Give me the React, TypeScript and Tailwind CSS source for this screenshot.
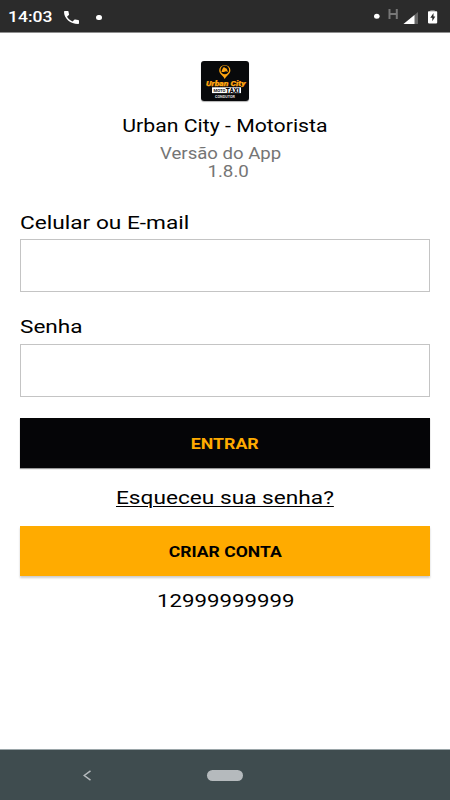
import { useState } from "react";

function StatusBar() {
  return (
    <div className="h-[33px] shrink-0 bg-[#2b2b2b] border-b border-[#8f8f8f] flex items-center justify-between text-white">
      <div className="flex items-center pl-2 pt-0.5">
        <span className="w-[56px] text-[15px] leading-none font-medium">
          <span className="inline-block origin-left scale-x-[1.17]">14:03</span>
        </span>
        <svg viewBox="3 3 18 18" preserveAspectRatio="none" className="w-[15px] h-[13px]" fill="currentColor">
          <path d="M6.62 10.79c1.44 2.83 3.76 5.14 6.59 6.59l2.2-2.2c.27-.27.67-.36 1.02-.24 1.12.37 2.33.57 3.57.57.55 0 1 .45 1 1V20c0 .55-.45 1-1 1-9.39 0-17-7.61-17-17 0-.55.45-1 1-1h3.5c.55 0 1 .45 1 1 0 1.25.2 2.45.57 3.57.11.35.03.74-.25 1.02l-2.2 2.2z" />
        </svg>
        <span className="ml-[17px] w-[6px] h-[5px] rounded-full bg-white" />
      </div>
      <svg viewBox="0 0 80 32" className="w-20 h-8">
        <ellipse cx="6.8" cy="16.2" rx="2.8" ry="2.5" fill="#fff" />
        <path d="M19.5 9v10M26.8 9v10M19.5 14h7.3" stroke="#777" strokeWidth="2" fill="none" />
        <path d="M33.5 24L48 12v12z" fill="#666" />
        <path d="M33.5 24L44.5 14.9V24z" fill="#fff" />
        <path d="M60.3 10h4.4v1.4h-4.4z" fill="#777" />
        <rect x="58" y="11.2" width="9.2" height="12.2" rx="0.8" fill="#fff" />
        <path d="M63.5 13l-3.2 4.7h2v3.6l3-4.8h-1.8z" fill="#2b2b2b" />
      </svg>
    </div>
  );
}

function Logo() {
  return (
    <svg viewBox="0 0 48 40" className="w-12 h-10 rounded-[3px] shadow-[0_1px_1px_rgba(0,0,0,0.3)]">
      <rect width="48" height="40" fill="#08090b" />
      <path d="M23.800 18.300c-1-3.300-5.600-5-5.600-9a5.600 5.400 0 0 1 11.200 0c0 4-4.600 5.700-5.600 9z" fill="#ffa510" />
      <circle cx="23.800" cy="8.900" r="4.300" fill="#08090b" />
      <path d="M20.400 11l1-3 1.400-2 1.600 1 1.400.7 1.200 3.300-2-.8-2.300.8z" fill="#ffa510" />
      <text x="5" y="24.500" textLength="39.500" lengthAdjust="spacingAndGlyphs" fill="#ffa510" stroke="#ffa510" strokeWidth="0.25" fontFamily="Roboto, sans-serif" fontSize="7.800" fontWeight="900" fontStyle="italic">Urban City</text>
      <rect x="11" y="26.300" width="29" height="5.800" fill="#fff" />
      <text x="12.500" y="31" textLength="12" lengthAdjust="spacingAndGlyphs" fill="#111" fontFamily="Roboto, sans-serif" fontSize="4.200" fontWeight="700">MOTO</text>
      <text x="24.800" y="31.500" textLength="14" lengthAdjust="spacingAndGlyphs" fill="#08090b" fontFamily="Roboto, sans-serif" fontSize="6.400" fontWeight="900">TÁXI</text>
      <text x="14" y="36.500" textLength="20" lengthAdjust="spacingAndGlyphs" fill="#ddd" fontFamily="Roboto, sans-serif" fontSize="4" fontWeight="700">CONDUTOR</text>
    </svg>
  );
}

export default function App() {
  const [login, setLogin] = useState("");
  const [password, setPassword] = useState("");

  return (
    <div className="w-full h-screen bg-white flex flex-col overflow-hidden text-black font-[Roboto,sans-serif]">
      <StatusBar />

      <main className="flex-1 flex flex-col px-5 pt-7">
        <header className="flex flex-col items-center">
          <Logo />
          <h1 className="mt-[15px] text-[18px] leading-5 whitespace-nowrap scale-x-[1.18]">Urban City - Motorista</h1>
          <p className="mt-[9px] pr-[7px] text-[16px] leading-[18px] text-[#757575] scale-x-[1.16]">Versão do App</p>
          <p className="pl-[5px] text-[16px] leading-[18px] text-[#757575] scale-x-[1.17]">1.8.0</p>
        </header>

        <form className="mt-[30px] flex flex-col" onSubmit={(e) => e.preventDefault()}>
          <label htmlFor="login" className="self-start origin-left scale-x-[1.225] text-[18.5px] leading-6">Celular ou E-mail</label>
          <input
            id="login"
            value={login}
            onChange={(e) => setLogin(e.target.value)}
            className="mt-[4px] h-[53px] border border-[#c4c4c4] px-3 outline-none"
          />
          <label htmlFor="password" className="mt-[23px] self-start origin-left scale-x-[1.22] text-[18.5px] leading-6">Senha</label>
          <input
            id="password"
            type="password"
            value={password}
            onChange={(e) => setPassword(e.target.value)}
            className="mt-[5px] h-[53px] border border-[#c4c4c4] px-3 outline-none"
          />
          <button type="submit" className="mt-[21px] h-[50px] pt-0.5 bg-[#050507] text-[#ffab00] text-[15px] font-bold shadow-[0_1px_1px_rgba(0,0,0,0.4)]">
            <span className="inline-block scale-x-[1.185]">ENTRAR</span>
          </button>
        </form>

        <a href="#" className="mt-[18px] self-center text-[18.5px] leading-6 underline decoration-1 underline-offset-2 scale-x-[1.225]">Esqueceu sua senha?</a>
        <button className="mt-4 h-[50px] pt-0.5 bg-[#ffab00] text-[15px] font-bold shadow-[0_2px_2px_rgba(0,0,0,0.2)]">
          <span className="inline-block scale-x-[1.17]">CRIAR CONTA</span>
        </button>
        <p className="mt-[13px] pl-px self-center text-[18px] leading-6 scale-x-[1.235]">12999999999</p>
      </main>

      <nav className="h-[51px] shrink-0 bg-[#3f4c4f] border-t border-[#9aa5a8] grid grid-cols-3 items-center">
        <svg viewBox="0 0 8 11" className="w-2 h-[11px] ml-[83px]" fill="none" stroke="#b5babd" strokeWidth="1.5">
          <path d="M7.5 0.8L1.2 5.500l6.300 4.700" />
        </svg>
        <span className="justify-self-center w-9 h-[11px] rounded-full bg-[#b5babd]" />
      </nav>
    </div>
  );
}
